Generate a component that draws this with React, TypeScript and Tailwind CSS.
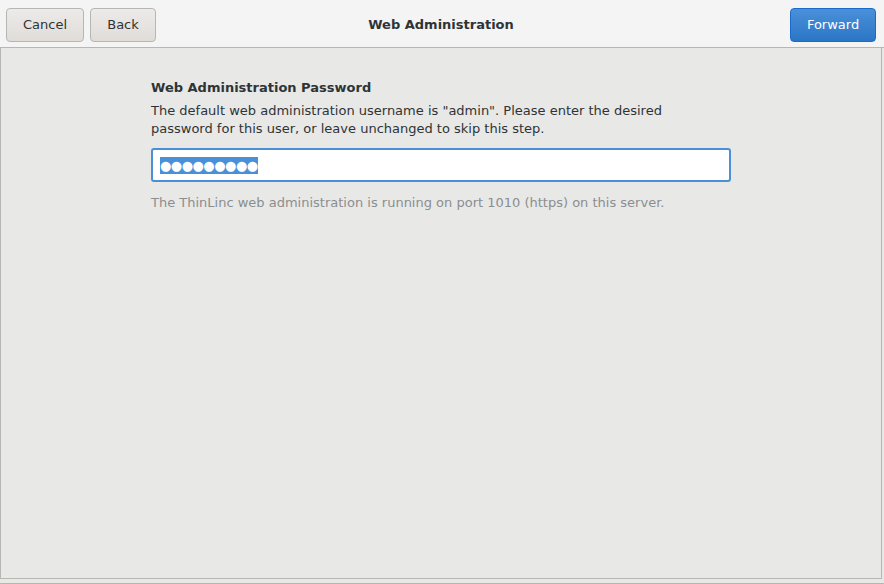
export default function App() {
  return (
    <div
      className="flex h-[584px] w-[884px] flex-col bg-[#e8e8e7] text-[13px] text-[#2e3436]"
      style={{ fontFamily: '"DejaVu Sans", sans-serif' }}
    >
      <header className="flex h-[48px] shrink-0 items-center border-b border-[#b6b6b3] bg-[#f4f4f4] px-[6px] pt-[2px]">
        <div className="flex flex-1 gap-[6px]">
          <button className="h-[34px] w-[78px] rounded-[4px] border border-[#b6b6b3] bg-gradient-to-b from-[#edebe9] to-[#dfdcd8] text-[#2e3436]">
            Cancel
          </button>
          <button className="h-[34px] w-[66px] rounded-[4px] border border-[#b6b6b3] bg-gradient-to-b from-[#edebe9] to-[#dfdcd8] text-[#2e3436]">
            Back
          </button>
        </div>
        <h1 className="font-bold">Web Administration</h1>
        <div className="flex flex-1 justify-end pr-[2px]">
          <button className="h-[34px] w-[86px] rounded-[4px] border border-[#1b6acb] bg-gradient-to-b from-[#4a90d9] to-[#2a76c6] text-white">
            Forward
          </button>
        </div>
      </header>

      <main className="mb-[4px] mr-[2px] flex-1 border-b border-l border-r border-[#b6b6b3]">
        <div className="ml-[150px] mt-[31px] w-[580px]">
          <h2 className="font-bold leading-[18px]">Web Administration Password</h2>
          <p className="mt-[5px] w-[540px] leading-[18px]">
            The default web administration username is "admin". Please enter the desired password for
            this user, or leave unchanged to skip this step.
          </p>
          <div className="mt-[10px] flex h-[34px] items-center rounded-[3px] border-2 border-[#4a90d9] bg-white px-[7px]">
            <span className="bg-[#4a90d9] text-[13px] leading-[17px] tracking-[-0.5px] text-white">
              ●●●●●●●●●
            </span>
          </div>
          <p className="mt-[12px] leading-[18px] text-[#8b8e8f]">
            The ThinLinc web administration is running on port 1010 (https) on this server.
          </p>
        </div>
      </main>
      <div className="h-[1px] bg-[#b6b6b3]" />
    </div>
  );
}
